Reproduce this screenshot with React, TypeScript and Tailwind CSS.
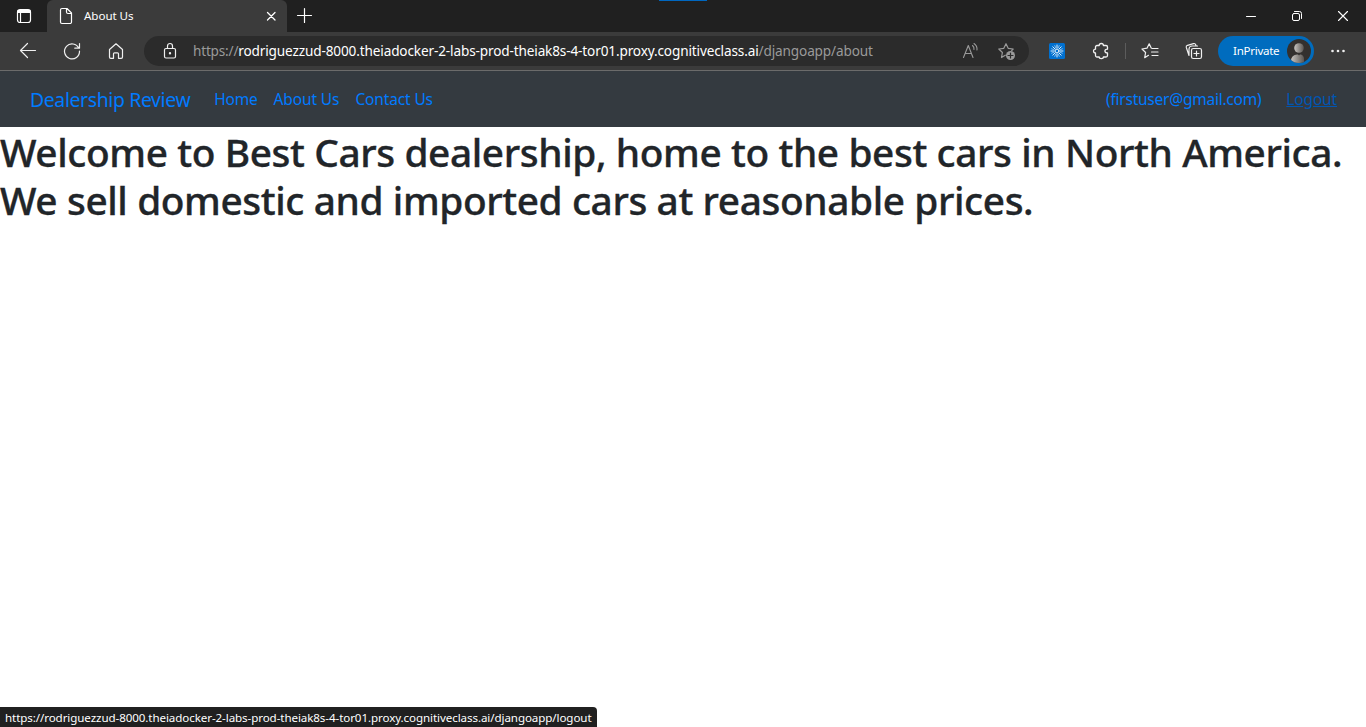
import React from "react";

const stroke = {
  fill: "none",
  stroke: "currentColor",
  strokeLinecap: "round" as const,
  strokeLinejoin: "round" as const,
};

function Icon({ size = 20, w = 1.1, children }: { size?: number; w?: number; children: React.ReactNode }) {
  return (
    <svg width={size} height={size} viewBox={`0 0 ${size} ${size}`} strokeWidth={w} {...stroke} className="block shrink-0">
      {children}
    </svg>
  );
}

function Cell({ children }: { children: React.ReactNode }) {
  return <button className="flex h-[38px] w-11 shrink-0 items-center justify-center text-[#f0f0f0]">{children}</button>;
}

function TabBar() {
  return (
    <div className="relative flex h-8 bg-[#202020] text-white">
      <div className="absolute left-[659px] top-0 h-px w-12 bg-[#0067c0]" />
      <div className="flex w-[47px] items-center justify-center pl-px">
        <Icon w={1.2}>
          <rect x="3.5" y="3.5" width="13" height="13" rx="2.5" />
          <path d="M4 4.5h12v2H4z" fill="currentColor" />
          <path d="M6.5 7v9" />
        </Icon>
      </div>
      <div className="flex w-60 items-center rounded-t-[6px] bg-[#3b3b3b] pl-[9px]">
        <Icon w={1.2}>
          <path d="M6 2.5h5l4.500 4.500v9a1.500 1.500 0 0 1-1.500 1.500H6A1.500 1.500 0 0 1 4.500 16V4A1.500 1.500 0 0 1 6 2.500M10.500 2.500v3.500a1.500 1.500 0 0 0 1.500 1.500h3.500" />
        </Icon>
        <span className="ml-2 flex-1 whitespace-nowrap text-[11.6px] tracking-[-0.05px]">About Us</span>
        <span className="mr-[6px]">
          <Icon w={1.3}>
            <path d="M6.500 6.500l7.500 7.500M14 6.500l-7.500 7.500" />
          </Icon>
        </span>
      </div>
      <div className="flex w-9 items-center justify-center">
        <Icon w={1.2}>
          <path d="M9.500 2.500v14M2.500 9.500h14" />
        </Icon>
      </div>
      <div className="ml-auto flex">
        <div className="flex w-[46px] items-center justify-center">
          <Icon w={1}>
            <path d="M5.500 10.500h9" />
          </Icon>
        </div>
        <div className="flex w-[46px] items-center justify-center">
          <Icon w={1}>
            <rect x="5.500" y="7.500" width="7" height="7" rx="1.500" />
            <path d="M7.500 5.500h5a2 2 0 0 1 2 2v5" />
          </Icon>
        </div>
        <div className="flex w-[46px] items-center justify-center">
          <Icon w={1.1}>
            <path d="M5.500 5.500l9 9M14.500 5.500l-9 9" />
          </Icon>
        </div>
      </div>
    </div>
  );
}

function Toolbar() {
  return (
    <div className="flex h-[39px] border-b border-[#6b6b6b] bg-[#3b3b3b] pl-1.5">
      <Cell>
        <Icon w={1.2}>
          <path d="M17.500 9.500H2.500M9.500 2.500L2.500 9.500l7 7" />
        </Icon>
      </Cell>
      <Cell>
        <Icon w={1.2}>
          <path d="M16.800 7.200A7.500 7.500 0 1 0 17.500 10M17.500 2.500v4.700h-4.700" />
        </Icon>
      </Cell>
      <Cell>
        <Icon w={1.2}>
          <path d="M3.500 8.500L10 2.800l6.500 5.700v7.500a1.300 1.300 0 0 1-1.300 1.300h-2.700v-4.500a1 1 0 0 0-1-1h-3a1 1 0 0 0-1 1v4.500H4.800A1.300 1.300 0 0 1 3.500 16z" />
        </Icon>
      </Cell>
      <div className="ml-1.5 mt-1 flex h-[30px] w-[885px] shrink-0 items-center rounded-full bg-[#2b2b2b] pl-4 text-[#9a9a9a]">
        <span className="text-[#f0f0f0]">
          <Icon w={1.2}>
            <rect x="4.500" y="7.500" width="11" height="9.500" rx="1.500" />
            <path d="M7.500 7.500V5a2.500 2.500 0 0 1 5 0v2.500" />
            <circle cx="10" cy="12.300" r=".6" fill="currentColor" />
          </Icon>
        </span>
        <span className="ml-[13px] flex-1 whitespace-nowrap text-[13.600px]">
          <span className="tracking-[-0.2px]">https://</span>
          <span className="tracking-[-0.14px] text-white">rodriguezzud-8000.theiadocker-2-labs-prod-theiak8s-4-tor01.proxy.cognitiveclass.ai</span>
          <span className="tracking-[-0.14px]">/djangoapp/about</span>
        </span>
        <span className="mr-[17px]">
          <Icon w={1.1}>
            <path d="M3.500 16.500L8.300 4.500l4.700 12M5 12.500h6.500M12.500 4.500a4.500 4.500 0 0 1 1.500 4M14 2.500a7 7 0 0 1 3 6.500" />
          </Icon>
        </span>
        <span className="mr-3">
          <Icon w={1.2}>
            <path d="M8.300 14.200L4.500 16.500l.9-5L1.800 8l5-.7L9 2.700l2.200 4.600 5 .7-1.500 1.500" />
            <circle cx="13.500" cy="14.500" r="4.500" fill="currentColor" stroke="none" />
            <path d="M13.500 12v5M11 14.500h5" stroke="#2b2b2b" />
          </Icon>
        </span>
      </div>
      <div className="ml-1.5 flex">
        <Cell>
          <svg width="16" height="16" viewBox="0 0 16 16" className="block">
            <rect width="16" height="16" rx="1.500" fill="#0070d0" />
            <g stroke="#e0effa" strokeWidth="1" fill="none" strokeLinecap="round">
              <path d="M8 2v3M8 11v3M2 8h3M11 8h3M3.800 3.800L5.900 5.900M10.100 10.100l2.100 2.100M12.200 3.800l-2.100 2.100M5.900 10.100l-2.100 2.100" />
              <path strokeWidth=".6" d="M5.800 2.600l1 2.500M10.200 2.600l-1 2.500M5.800 13.400l1-2.500M10.200 13.400l-1-2.500M2.600 5.800l2.500 1M2.600 10.200l2.500-1M13.400 5.800l-2.500 1M13.400 10.200l-2.500-1" />
              <circle cx="8" cy="8" r="1.900" />
            </g>
          </svg>
        </Cell>
        <Cell>
          <Icon w={1.3}>
            <path d="M6 4.500h2.200c0-1.200.9-2 2.100-2s2.100.8 2.100 2H15a1.500 1.500 0 0 1 1.500 1.500v2.200c-1.400 0-2.600.7-2.600 1.900s1.200 1.900 2.600 1.900v2.500A1.500 1.500 0 0 1 15 16h-2.600c0 .9-.9 1.600-2.100 1.600S8.200 16.900 8.200 16H6a1.500 1.500 0 0 1-1.500-1.500V12c-1.200 0-2-.8-2-1.900s.8-1.900 2-1.900V6A1.500 1.500 0 0 1 6 4.500z" />
          </Icon>
        </Cell>
      </div>
      <div className="ml-0.5 mt-[5px] flex h-7 items-center">
        <div className="h-4 w-px bg-[#5c5c5c]" />
      </div>
      <div className="ml-0.5 flex">
        <Cell>
          <Icon w={1.2}>
            <path d="M8.500 14.300L4.700 16.700l.9-5.200L2 8l5-.8L9.200 2.800l2 4.200M12 7.500h6M11.500 11h6.500M12 14.500h6" />
          </Icon>
        </Cell>
        <Cell>
          <Icon w={1.2}>
            <rect x="7.500" y="7.500" width="10" height="10" rx="1.800" />
            <path d="M12.500 10v5M10 12.500h5M5 14.500L2.300 6.500a1.800 1.800 0 0 1 1.200-2.200L9.500 2.600a1.800 1.800 0 0 1 2.200 1.200l.4 1.200M5 14V8a3 3 0 0 1 3-3h5.500" />
          </Icon>
        </Cell>
      </div>
      <div className="ml-0.5 mt-1 flex h-[30px] w-24 shrink-0 items-center rounded-full bg-[#006cbe] pl-[15px] text-white">
        <span className="w-[54px] text-[11.600px] tracking-[-0.3px]">InPrivate</span>
        <svg width="24" height="24" viewBox="0 0 24 24" className="block">
          <defs>
            <linearGradient id="face" x1="0" x2="1" y1="0" y2="0">
              <stop offset="0" stopColor="#c8c4c0" />
              <stop offset="1" stopColor="#5a5652" />
            </linearGradient>
            <clipPath id="disc"><circle cx="12" cy="12" r="12" /></clipPath>
          </defs>
          <circle cx="12" cy="12" r="12" fill="#33302e" />
          <g clipPath="url(#disc)" fill="url(#face)">
            <circle cx="12" cy="9" r="4.800" />
            <path d="M4 24v-2.500a6 6 0 0 1 6-6h1l1 1 1-1h1a5 5 0 0 1 3 5v3.500z" />
          </g>
        </svg>
      </div>
      <div className="ml-0.5 flex">
        <Cell>
          <Icon>
            <g fill="currentColor" stroke="none">
              <circle cx="4.500" cy="10" r="1.300" />
              <circle cx="10" cy="10" r="1.300" />
              <circle cx="15.500" cy="10" r="1.300" />
            </g>
          </Icon>
        </Cell>
      </div>
    </div>
  );
}

export default function App() {
  return (
    <div className="relative flex h-[727px] w-[1366px] flex-col overflow-hidden bg-white font-['Noto_Sans','Open_Sans',sans-serif]">
      <TabBar />
      <Toolbar />
      <nav className="flex h-14 items-center bg-[#343a40] pl-[30px] pr-[29px] pt-0.5 text-[15.500px] text-[#007bff]">
        <a className="text-[19.400px] tracking-[-0.36px]">Dealership Review</a>
        <a className="ml-6 tracking-[-0.25px]">Home</a>
        <a className="ml-4 tracking-[-0.1px]">About Us</a>
        <a className="ml-4 tracking-[-0.14px]">Contact Us</a>
        <span className="ml-auto tracking-[-0.24px]">(firstuser@gmail.com)</span>
        <a className="ml-[25px] tracking-[-0.15px] text-[#0056b3] underline">Logout</a>
      </nav>
      <h1 className="whitespace-nowrap pt-px text-[38.800px] font-medium leading-[48px] tracking-[-0.39px] text-[#212529] [-webkit-text-stroke:0.35px_#212529]">
        <span className="block">Welcome to Best Cars dealership, home to the best cars in North America.</span>
        <span className="block">We sell domestic and imported cars at reasonable prices.</span>
      </h1>
      <div className="absolute bottom-0 left-0 flex h-5 w-[597px] items-center whitespace-nowrap rounded-tr bg-[#202020] pl-[5px] pt-px text-[11.600px] tracking-[-0.092px] text-white">
        https://rodriguezzud-8000.theiadocker-2-labs-prod-theiak8s-4-tor01.proxy.cognitiveclass.ai/djangoapp/logout
      </div>
    </div>
  );
}
